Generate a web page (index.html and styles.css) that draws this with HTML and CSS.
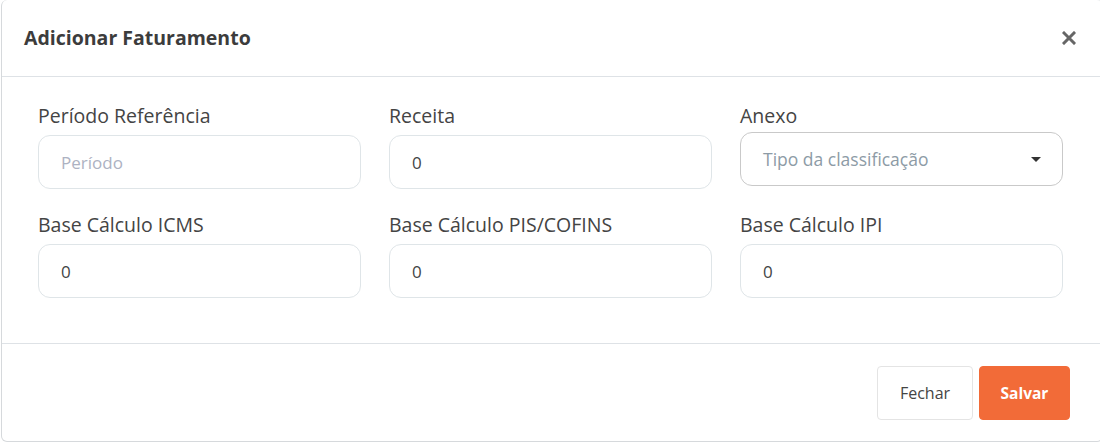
FILE: index.html
```html
<!DOCTYPE html>
<html lang="pt-BR">
<head>
<meta charset="utf-8">
<title>Adicionar Faturamento</title>
<link rel="stylesheet" href="styles.css">
</head>
<body>
<div class="modal">
  <div class="modal-header">
    <h5 class="modal-title">Adicionar Faturamento</h5>
    <button class="close" type="button" aria-label="Fechar">
      <svg width="14" height="14" viewBox="0 0 14 14"><path d="M2 2 L12 12 M12 2 L2 12" stroke="#666" stroke-width="3" stroke-linecap="square"/></svg>
    </button>
  </div>
  <div class="modal-body">
    <div class="grid">
      <div class="group">
        <label class="label">Período Referência</label>
        <div class="input placeholder">Período</div>
      </div>
      <div class="group">
        <label class="label">Receita</label>
        <div class="input">0</div>
      </div>
      <div class="group">
        <label class="label">Anexo</label>
        <div class="select">
          <span>Tipo da classificação</span>
          <span class="caret"></span>
        </div>
      </div>
      <div class="group">
        <label class="label">Base Cálculo ICMS</label>
        <div class="input">0</div>
      </div>
      <div class="group">
        <label class="label">Base Cálculo PIS/COFINS</label>
        <div class="input">0</div>
      </div>
      <div class="group">
        <label class="label">Base Cálculo IPI</label>
        <div class="input">0</div>
      </div>
    </div>
  </div>
  <div class="modal-footer">
    <button class="btn btn-light" type="button">Fechar</button>
    <button class="btn btn-primary" type="button">Salvar</button>
  </div>
</div>
</body>
</html>
```
FILE: styles.css
```css
* { box-sizing: border-box; }
html, body { margin: 0; padding: 0; background: #fff; }
body {
  font-family: "Open Sans", "Noto Sans", sans-serif;
  color: #444;
  overflow: hidden;
}
.modal {
  margin-left: 1px;
  width: 1102px;
  height: 442px;
  border: 1px solid #d6d9dc;
  border-top: none;
  border-radius: 6px;
  background: #fff;
  display: flex;
  flex-direction: column;
}
.modal-header {
  height: 77px;
  border-bottom: 1px solid #dee2e6;
  display: flex;
  align-items: center;
  justify-content: space-between;
  padding: 0 26px 0 22px;
  flex: none;
}
.modal-title {
  margin: -2px 0 0 0;
  font-size: 19.5px;
  font-weight: 700;
  color: #3c3c3c;
}
.close {
  border: none;
  background: none;
  padding: 0;
  width: 14px;
  height: 14px;
  display: flex;
  margin-top: -1px;
}
.modal-body {
  padding: 27px 38px 45px 36px;
  border-bottom: 1px solid #dee2e6;
  flex: none;
}
.grid {
  display: grid;
  grid-template-columns: 323px 323px 323px;
  column-gap: 28px;
  row-gap: 24px;
}
.group { display: flex; flex-direction: column; }
.label {
  font-size: 19.5px;
  line-height: 24px;
  color: #444;
  margin-bottom: 7px;
}
.input {
  height: 54px;
  border: 1px solid #dfe5e8;
  border-radius: 12px;
  padding: 0 22px;
  display: flex;
  align-items: center;
  font-size: 17px;
  color: #444;
}
.input.placeholder { color: #adb2c2; }
.select {
  height: 54px;
  margin-top: -3px;
  margin-bottom: 3px;
  border: 1px solid #c9c9c9;
  border-radius: 12px;
  padding: 0 22px;
  display: flex;
  align-items: center;
  justify-content: space-between;
  font-size: 17.5px;
  color: #8d9ba6;
}
.caret {
  width: 0;
  height: 0;
  border-left: 5px solid transparent;
  border-right: 5px solid transparent;
  border-top: 5px solid #333;
  margin-right: -1px;
}
.modal-footer {
  display: flex;
  justify-content: flex-end;
  gap: 6px;
  padding: 22px 32px 0 0;
}
.btn {
  height: 54px;
  border-radius: 4px;
  font-family: inherit;
  font-size: 16px;
  cursor: pointer;
}
.btn-light {
  width: 96px;
  background: #fff;
  border: 1px solid #e4e4e4;
  color: #444;
}
.btn-primary {
  width: 91px;
  background: #f26b38;
  border: 1px solid #f26b38;
  color: #fff;
  font-weight: 700;
  font-size: 15.5px;
}
```
